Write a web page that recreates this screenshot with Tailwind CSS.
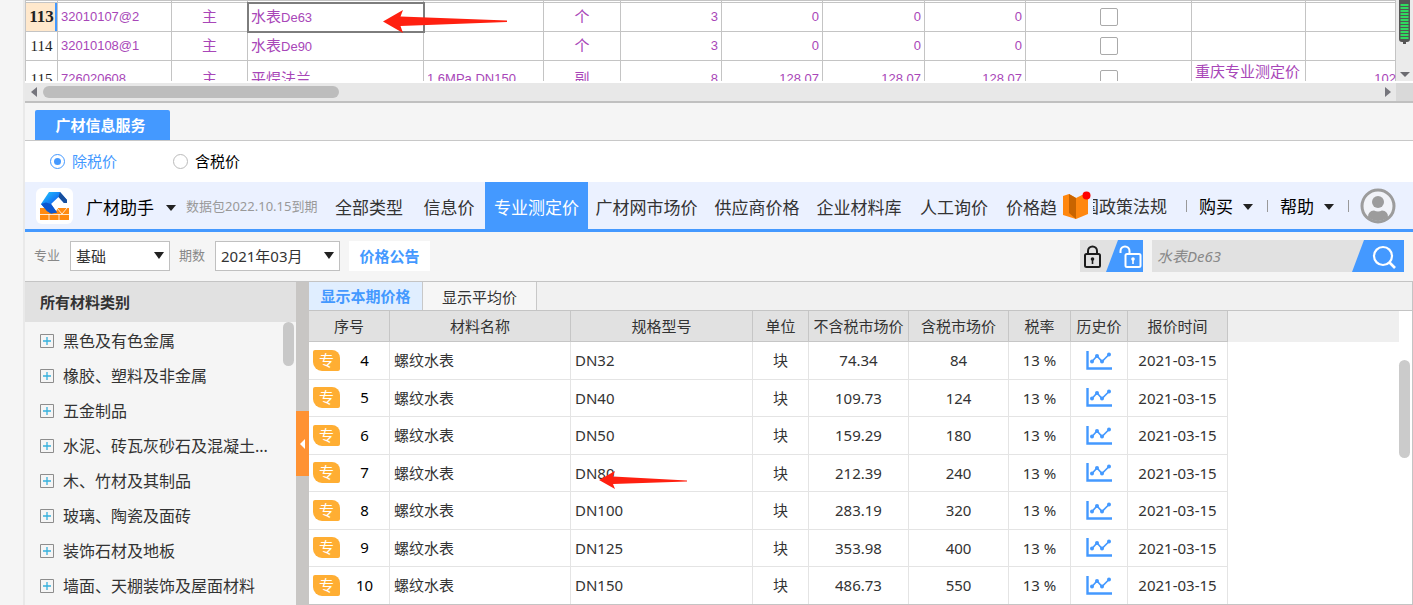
<!DOCTYPE html>
<html lang="zh-CN">
<head>
<meta charset="utf-8">
<title>广材信息服务</title>
<script src="https://cdn.jsdelivr.net/npm/@tailwindcss/browser@4"></script>
</head>
<body class="flex h-screen overflow-hidden bg-[#f5f5f5] font-['Noto_Sans','Noto_Sans_CJK_SC',sans-serif] text-[15px] text-[#333]">
<div class="w-[25px] shrink-0 border-r-2 border-[#e9e9e9] bg-[#f5f5f5]"></div>

<div class="flex min-w-0 flex-1 flex-col">

  <!-- Bill of materials grid -->
  <section class="relative shrink-0">
    <div class="flex h-[81px] bg-white">
      <div class="min-w-0 flex-1 overflow-hidden">
        <table class="w-full table-fixed border-collapse font-['Liberation_Sans','Noto_Sans_CJK_SC',sans-serif] text-[13px] text-[#a846b8] [&_td]:border [&_td]:border-[#c4c4c4] [&_td]:p-0 [&_td]:px-[3px] [&_th]:border [&_th]:border-[#c4c4c4] [&_b]:text-[15px] [&_b]:font-normal">
          <colgroup>
            <col class="w-[32px]"><col class="w-[114px]"><col class="w-[76px]"><col class="w-[176px]"><col class="w-[120px]"><col class="w-[77px]"><col class="w-[101px]"><col class="w-[101px]"><col class="w-[102px]"><col class="w-[101px]"><col class="w-[166px]"><col class="w-[114px]"><col>
          </colgroup>
          <tbody id="bill"></tbody>
        </table>
      </div>
      <div class="flex w-[17px] flex-col items-center justify-between bg-[#ebebeb] pb-[3px]">
        <svg width="11" height="44" viewBox="0 0 11 44"><path d="M0 0H11V39Q11 42 8 42H7V44H4V42H3Q0 42 0 39Z" fill="#555"/><path d="M5.500 4V40" stroke="#2fdc5f" stroke-width="8" stroke-dasharray="2 1"/></svg>
        <svg width="10" height="6"><path d="M0 0H10L5 5Z" fill="#6b6b70"/></svg>
      </div>
    </div>
    <div class="flex h-[22px] border-t-2 border-b-2 border-t-white border-b-[#c0c0c0] bg-[#e8e8e8]">
      <div class="flex flex-1 items-center pr-[5px]">
        <svg class="ml-[6px]" width="6" height="10"><path d="M6 0V10L0 5Z" fill="#75757c"/></svg>
        <div class="ml-[6px] h-3 w-[296px] rounded-full bg-[#bdbdbd]"></div>
        <svg class="ml-auto" width="6" height="10"><path d="M0 0V10L6 5Z" fill="#75757c"/></svg>
      </div>
      <div class="w-[17px] bg-[#d9d9d9]"></div>
    </div>
    <svg class="absolute left-[358px] top-[9px]" width="125" height="25"><path d="M0 12.500L20 1L17.500 7.500L124 11.500V13L17.500 17L20 24Z" fill="#ff2010"/></svg>
  </section>

  <!-- Service tab and tax switch -->
  <div class="flex h-[38px] shrink-0 items-end border-b border-[#c8c8c8] pl-[10px]">
    <button class="h-[30px] w-[135px] rounded-t-[2px] bg-[#4499ff] pr-1 font-bold text-white">广材信息服务</button>
  </div>
  <div class="flex h-[41px] shrink-0 items-center bg-white pl-[25px]">
    <label class="flex w-[123px] items-center gap-[7px] text-[#4499ff]"><input type="radio" name="tax" checked class="size-[15px] appearance-none rounded-full border border-[#4499ff] bg-[#4499ff] bg-clip-content p-[3px]">除税价</label>
    <label class="flex items-center gap-[7px] text-black"><input type="radio" name="tax" class="size-[15px] appearance-none rounded-full border border-[#bbb] bg-white">含税价</label>
  </div>

  <!-- Main navigation -->
  <nav class="flex h-[50px] shrink-0 border-b-3 border-[#4499ff] bg-[#ebf1ff]">
    <div class="flex w-[300px] shrink-0 items-center">
      <span class="ml-[11px] flex h-[36px] w-[37px] items-center justify-center rounded-[6px] bg-white">
        <svg width="31" height="30" viewBox="0 0 31 30">
          <defs><linearGradient id="lg" x1="0" y1="0" x2="1" y2="1"><stop offset="0" stop-color="#22d0ff"/><stop offset=".45" stop-color="#1477f5"/><stop offset="1" stop-color="#0b4db8"/></linearGradient></defs>
          <path d="M1 17h7l4 5h4l3-5h11v12H1z" fill="#ff8a10"/>
          <path d="M1 23.500H30M10 23V29M20 23V29M18 17l5 6l5-6" stroke="#fff" stroke-width="1" opacity=".8" fill="none"/>
          <path d="M2 13L10 1H21L28 9V12H25L19.500 6L12 13L18 21.500L12 22.500L8 20Z" fill="url(#lg)"/>
          <path d="M2 13L7 11.500L12 13L18 21.500L12 22.500L8 20Z" fill="#0c56cf"/>
          <path d="M21 1L28 9V12H25L19.500 6Z" fill="#164f9e"/>
        </svg>
      </span>
      <button class="ml-[13px] flex items-center gap-[12px] pt-1 text-[17px] text-black">广材助手<svg width="10" height="6"><path d="M0 0H10L5 6Z" fill="#222"/></svg></button>
      <span class="ml-[10px] pt-[2px] whitespace-nowrap text-[13px] text-[#999]">数据包2022.10.15到期</span>
    </div>
    <div class="flex min-w-0 shrink-0 text-[17px] [&_button]:pt-[5px] [&_button]:whitespace-nowrap">
      <button class="w-[88px]">全部类型</button>
      <button class="w-[72px]">信息价</button>
      <button class="w-[103px] bg-[#4499ff] text-white">专业测定价</button>
      <button class="w-[117px]">广材网市场价</button>
      <button class="w-[104px]">供应商价格</button>
      <button class="w-[100px]">企业材料库</button>
      <button class="w-[90px]">人工询价</button>
      <button class="w-[61px] pl-[7px] text-left">价格趋</button>
    </div>
    <button class="flex items-center gap-[2px] pl-[3px]">
      <svg width="28" height="29" viewBox="0 0 28 29"><path d="M0 5L6 3L13 7L19 4L25 5V23L13 28L0 24Z" fill="#ff870f"/><path d="M6 3L13 7V28L6 22Z" fill="#c96400"/><circle cx="23.500" cy="4.500" r="4" fill="#f00"/></svg>
      <span class="flex w-[74px] justify-end overflow-hidden pt-[3px] whitespace-nowrap text-[17px]">国政策法规</span>
    </button>
    <div class="ml-auto flex items-center pr-[17px] text-[17px] text-black">
      <span class="h-3 w-px bg-[#999]"></span>
      <button class="ml-[12px] flex items-center gap-[10px] pt-[3px]">购买<svg width="10" height="6"><path d="M0 0H10L5 6Z" fill="#222"/></svg></button>
      <span class="ml-[14px] h-3 w-px bg-[#999]"></span>
      <button class="ml-[12px] flex items-center gap-[10px] pt-[3px]">帮助<svg width="10" height="6"><path d="M0 0H10L5 6Z" fill="#222"/></svg></button>
      <span class="ml-[14px] h-3 w-px bg-[#999]"></span>
      <button class="ml-[11px]" aria-label="用户"><svg width="36" height="36" viewBox="0 0 36 36"><defs><clipPath id="av"><circle cx="18" cy="18" r="15"/></clipPath></defs><circle cx="18" cy="18" r="16" fill="#f1f3f8" stroke="#9c9c9c" stroke-width="3"/><g clip-path="url(#av)" fill="#9c9c9c"><circle cx="18" cy="14" r="6"/><path d="M8 34V29Q8 23 14 22.500Q18 24.500 22 22.500Q28 23 28 29V34Z"/></g></svg></button>
    </div>
  </nav>

  <!-- Filters -->
  <form class="flex h-[50px] shrink-0 items-center border-b border-[#c4c4c4] pr-[9px] pl-[9px] pb-px">
    <label for="major" class="w-[36px] text-[13px] text-[#888]">专业</label>
    <span class="relative flex">
      <select id="major" class="h-[30px] w-[100px] appearance-none border border-[#c0c0c0] bg-white pl-[5px] text-[15px]"><option>基础</option></select>
      <svg class="pointer-events-none absolute top-[11px] right-[6px]" width="10" height="7"><path d="M0 0H10L5 7Z" fill="#222"/></svg>
    </span>
    <label for="period" class="ml-[9px] w-[36px] text-[13px] text-[#888]">期数</label>
    <span class="relative flex">
      <select id="period" class="h-[30px] w-[125px] appearance-none border border-[#c0c0c0] bg-white pl-[5px] text-[15px]"><option>2021年03月</option></select>
      <svg class="pointer-events-none absolute top-[11px] right-[6px]" width="10" height="7"><path d="M0 0H10L5 7Z" fill="#222"/></svg>
    </span>
    <button type="button" class="ml-[9px] h-[30px] w-[81px] bg-white font-bold text-[#4499ff]">价格公告</button>
    <button type="button" class="ml-auto" aria-label="锁定">
      <svg width="63" height="32" viewBox="0 0 63 32" fill="none"><path d="M0 0H63V32H0Z" fill="#e1e1e1"/><path d="M38 0H63V32H26Z" fill="#4499ff"/>
      <g stroke="#1c1c1c" stroke-width="2"><rect x="5" y="14" width="15" height="13" rx="1.500"/><path d="M8 14V11A4.500 4.500 0 0 1 17 11V14"/></g><circle cx="12.500" cy="19" r="1.800" fill="#1c1c1c"/><path d="M12.500 19V24" stroke="#1c1c1c" stroke-width="1.600"/>
      <g stroke="#fff" stroke-width="2"><rect x="45.500" y="14" width="15" height="13" rx="1.500"/><path d="M40.500 13V11A4.500 4.500 0 0 1 49.500 11V14"/></g><circle cx="53" cy="19" r="1.800" fill="#fff"/><path d="M53 19V24" stroke="#fff" stroke-width="1.600"/></svg>
    </button>
    <div class="ml-[9px] flex h-8 w-[252px] bg-[#e1e1e1]">
      <input type="text" aria-label="搜索材料" placeholder="水表De63" class="min-w-0 flex-1 pl-[5px] text-[15px] italic placeholder:text-[#888]">
      <button type="button" aria-label="搜索"><svg width="52" height="32" viewBox="0 0 52 32" fill="none"><path d="M12 0H52V32H0Z" fill="#4499ff"/><circle cx="31" cy="16" r="9" stroke="#fff" stroke-width="2.200"/><path d="M37.500 22.500L43 28" stroke="#fff" stroke-width="2.600"/></svg></button>
    </div>
  </form>

  <div class="flex min-h-0 flex-1">
    <!-- Category tree -->
    <aside class="flex w-[271px] shrink-0 flex-col">
      <h2 class="flex h-10 shrink-0 items-center bg-[#e1e1e1] pl-[15px] font-bold">所有材料类别</h2>
      <div class="flex min-h-0 flex-1 overflow-hidden">
        <ul id="tree" class="min-w-0 flex-1 pt-px"></ul>
        <div class="mr-[2px] h-11 w-[11px] rounded-full bg-[#c8c8c8]"></div>
      </div>
    </aside>
    <div class="flex w-[13px] shrink-0 items-center bg-[#c8c6c4]">
      <button aria-label="收起" class="flex h-[65px] w-[13px] items-center justify-center bg-[#ff9233]"><svg width="5" height="10"><path d="M5 0V10L0 5Z" fill="#fff"/></svg></button>
    </div>

    <!-- Price table -->
    <main class="flex min-w-0 flex-1 flex-col border-r border-b border-[#c4c4c4] bg-white">
      <div class="flex h-[29px] shrink-0 border-b border-[#c4c4c4] bg-[#f1f1f1]">
        <button class="w-[114px] border-r border-[#c8c8c8] bg-[#e0eeff] font-bold text-[#4499ff]">显示本期价格</button>
        <button class="w-[114px] border-r border-[#c8c8c8] bg-[#f6f6f6] pt-[2px]">显示平均价</button>
      </div>
      <div class="relative flex min-h-0 flex-1">
        <div class="min-w-0 flex-1 overflow-hidden">
          <table class="w-full table-fixed border-separate border-spacing-0 text-center [&_td]:border-r [&_td]:border-b [&_td]:border-[#e4e4e4] [&_td]:p-0 [&_td:last-child]:border-0 [&_th]:border-r [&_th]:border-b [&_th]:border-[#c6c6c6] [&_th]:bg-[#e1e1e1] [&_th]:p-0 [&_th]:font-normal [&_th]:whitespace-nowrap">
            <colgroup><col class="w-[81px]"><col class="w-[181px]"><col class="w-[182px]"><col class="w-[56px]"><col class="w-[100px]"><col class="w-[100px]"><col class="w-[62px]"><col class="w-[57px]"><col class="w-[100px]"><col></colgroup>
            <thead><tr class="h-[31px]"><th>序号</th><th>材料名称</th><th>规格型号</th><th>单位</th><th>不含税市场价</th><th>含税市场价</th><th>税率</th><th>历史价</th><th>报价时间</th><td class="bg-[#efefef]"></td></tr></thead>
            <tbody id="prices"></tbody>
          </table>
        </div>
        <div class="w-[13px] pt-[49px]"><div class="h-[98px] w-[11px] rounded-full bg-[#cbcbcb]"></div></div>
        <svg class="absolute left-[290px] top-[159px]" width="89" height="20"><path d="M0 10L16 1L14 6.500L88 10.500V11.500L14 14L16 19Z" fill="#ff2010"/></svg>
      </div>
    </main>
  </div>
</div>

<script>
const bill = [
  ['113', '32010107@2', '<b>主</b>', '<b>水表</b>De63', '', '<b>个</b>', '3', '0', '0', '0', '', ''],
  ['114', '32010108@1', '<b>主</b>', '<b>水表</b>De90', '', '<b>个</b>', '3', '0', '0', '0', '', ''],
  ['115', '726020608', '<b>主</b>', '<b>平焊法兰</b>', '1.6MPa DN150', '<b>副</b>', '8', '128.07', '128.07', '128.07', '<b>重庆专业测定价</b>', '102']
];
document.getElementById('bill').innerHTML = '<tr class="h-[2px]">' + '<td></td>'.repeat(13) + '</tr>' + bill.map((r, i) => `
<tr class="${i < 2 ? 'h-[29px]' : 'h-[37px]'}">
<th class="p-0 font-['Liberation_Serif',serif] ${i ? 'text-[15px] font-normal text-[#222]' : 'bg-[#ffe8cc] text-[17px] font-bold text-[#222] shadow-[inset_-2px_0_0_#4499ff]'}">${r[0]}</th>
<td>${r[1]}</td><td class="text-center">${r[2]}</td>
<td class="${i ? '' : 'outline-2 -outline-offset-1 outline-[#7d7d7d]'}">${r[3]}</td>
<td>${r[4]}</td><td class="text-center">${r[5]}</td>
<td class="text-right">${r[6]}</td><td class="text-right">${r[7]}</td><td class="text-right">${r[8]}</td><td class="text-right">${r[9]}</td>
<td><input type="checkbox" aria-label="第${r[0]}行" class="mx-auto block size-[18px] appearance-none rounded-[2px] border border-[#aaa] bg-white"></td>
<td class="align-top whitespace-nowrap">${r[10]}</td><td class="text-right"><span class="-mr-1 block">${r[11]}</span></td>
</tr>`).join('');

const cats = ['黑色及有色金属', '橡胶、塑料及非金属', '五金制品', '水泥、砖瓦灰砂石及混凝土...', '木、竹材及其制品', '玻璃、陶瓷及面砖', '装饰石材及地板', '墙面、天棚装饰及屋面材料'];
document.getElementById('tree').innerHTML = cats.map(c => `
<li><button class="flex h-[35px] w-full items-center gap-[9px] pl-[15px] text-[16px] whitespace-nowrap"><svg class="shrink-0" width="14" height="14" fill="none"><path d="M.5 .5H13.500V13.500H.5Z" stroke="#8d8d8d"/><path d="M7 3V11M3 7H11" stroke="#35b0dc" stroke-width="1.300"/></svg>${c}</button></li>`).join('');

const rows = [[4, 'DN32', '74.34', 84], [5, 'DN40', '109.73', 124], [6, 'DN50', '159.29', 180], [7, 'DN80', '212.39', 240], [8, 'DN100', '283.19', 320], [9, 'DN125', '353.98', 400], [10, 'DN150', '486.73', 550]];
document.getElementById('prices').innerHTML = rows.map(([n, spec, net, gross]) => `
<tr class="h-[38px] even:h-[37px]">
<td><div class="flex items-center pb-px pl-[4px]"><span class="flex h-[21px] w-[27px] items-center justify-center rounded-tl-[2px] rounded-tr-[8px] rounded-br-[2px] rounded-bl-[9px] bg-[#ffae33] text-[15px] text-white">专</span><span class="flex-1 text-black">${n}</span></div></td>
<td><div class="pl-1 text-left">螺纹水表</div></td><td><div class="pl-1 text-left">${spec}</div></td><td>块</td><td>${net}</td><td>${gross}</td><td>13 %</td>
<td><button class="block w-full" aria-label="历史价"><svg class="mx-auto" width="26" height="20" viewBox="0 0 26 20" fill="none"><path d="M1.500 0V17.500H26" stroke="#4499ff" stroke-width="2.400"/><path d="M6 10.500L11 5L16 10.500L23 3.500" stroke="#4499ff" stroke-width="1.700"/><g fill="#4499ff"><circle cx="6" cy="10.500" r="2"/><circle cx="11" cy="5" r="2"/><circle cx="16" cy="10.500" r="2"/><circle cx="23" cy="3.500" r="2"/></g></svg></button></td>
<td>2021-03-15</td><td></td></tr>`).join('');
</script>
</body>
</html>
